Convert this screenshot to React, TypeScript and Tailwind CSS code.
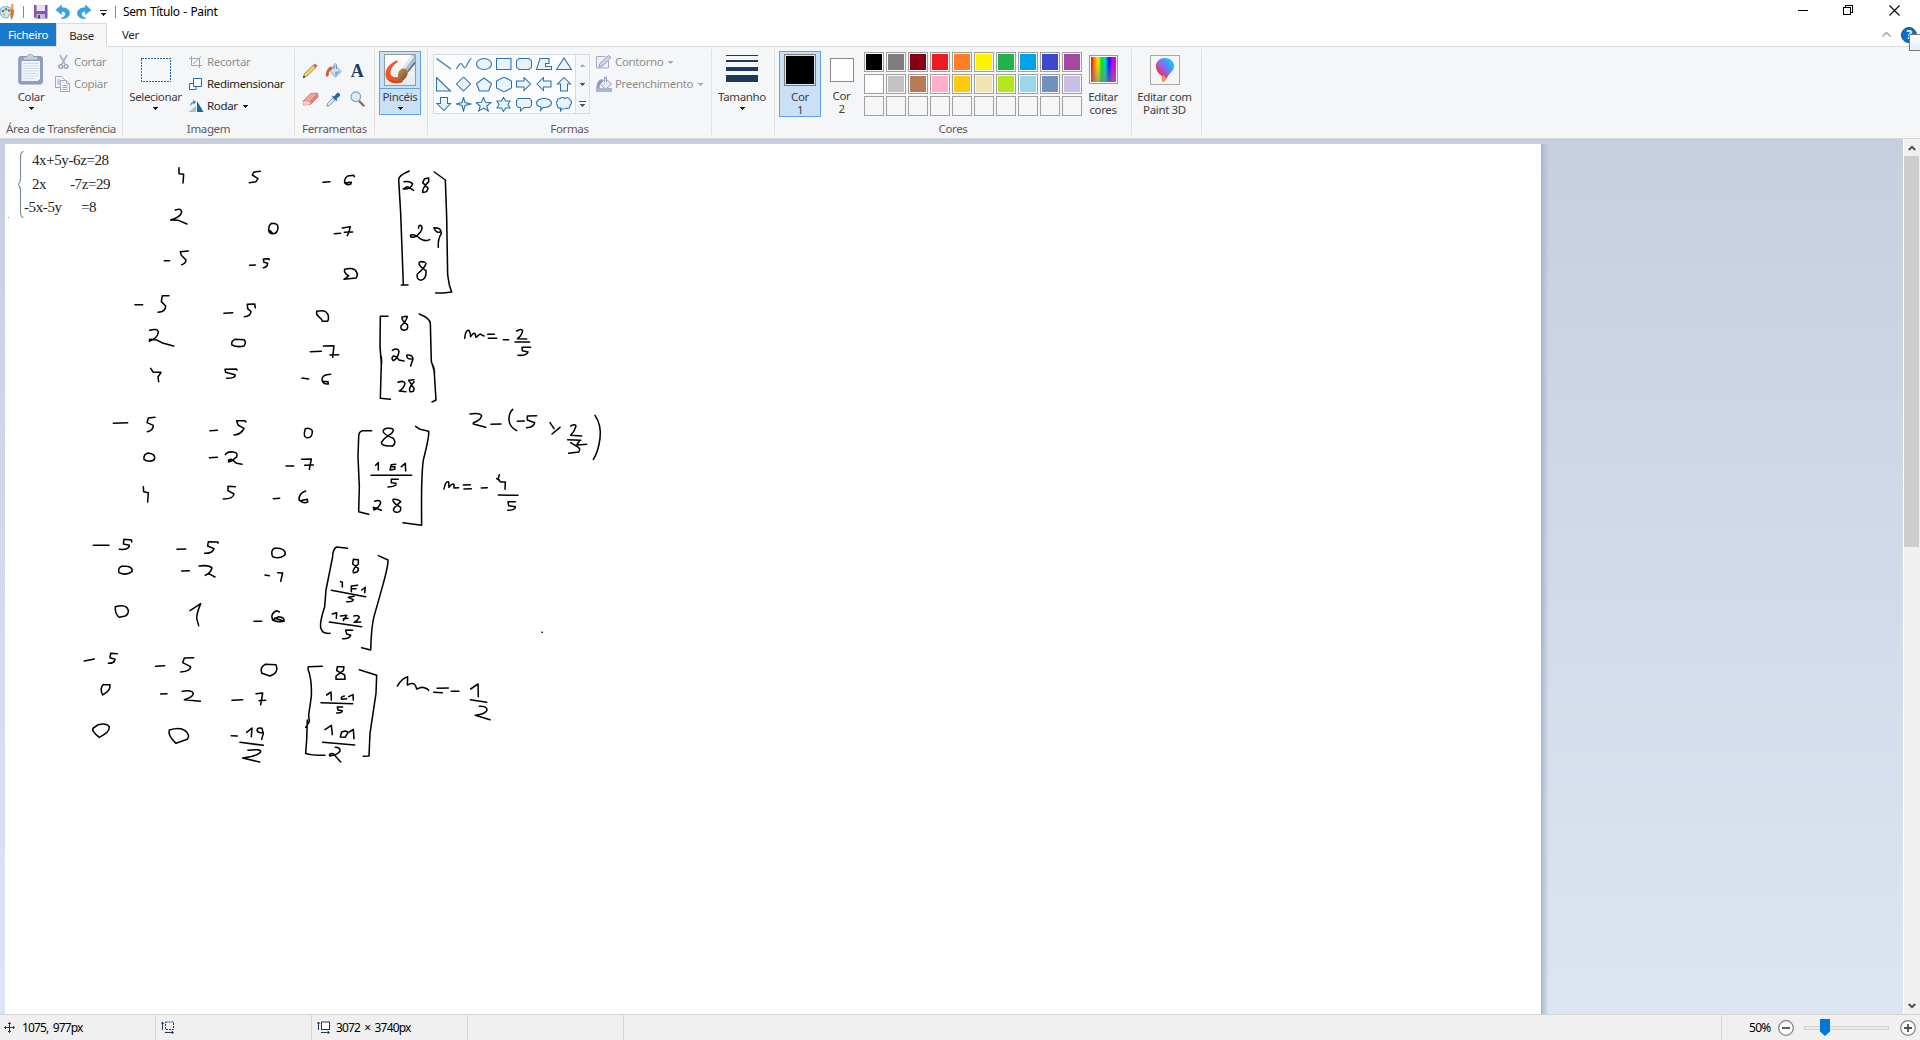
import React from "react";

/* ---------- freehand ink, in units of a third of a pixel ---------- */

type Stroke = { x: number; y: number; d: string[] };

const INK: Stroke[] = [
  {
    x: 0,
    y: 140,
    d: [
      "M537 83L537 101L551 103L549 129",
      "M781 94L762 96L757 105L774 116L768 125L748 128",
      "M526 210Q545 204 545 216Q542 232 512 240L535 241L561 252",
      "M816 250Q806 254 806 270Q808 282 820 281Q833 280 834 262Q834 250 816 250M810 272L818 280",
      "M493 362L509 362M565 333L541 335L544 346L558 360Q557 371 545 374",
      "M749 376L766 375M808 359L806 356L790 357L792 367L803 370Q802 381 790 383",
      "M405 494L428 494M507 467L487 467L484 485L497 498Q497 516 474 517",
      "M672 520L698 518M766 503L764 492L742 493L743 506L753 515Q751 530 733 530",
      "M449 571Q473 564 475 576Q473 595 448 604L449 598L470 600L490 610L521 618",
      "M705 598Q692 604 696 615Q712 623 732 618Q740 606 732 599L705 598",
      "M452 685L460 697L483 697L474 711L476 725",
      "M711 690L709 687L675 688L677 697L705 704Q708 715 680 715",
    ],
  },
  {
    x: 300,
    y: 150,
    d: [
      "M69 97L90 95M163 80L161 76L143 78Q132 86 134 98Q140 106 152 103L154 97L137 98",
      "M103 251L122 250M127 234L151 230Q148 245 142 257M133 247L158 246",
      "M134 358Q154 353 164 359Q178 372 168 384L132 388L146 378Q130 368 134 358",
      "M328 63Q298 75 296 88L302 190L310 404M304 405L324 405",
      "M403 66L436 90L440 200L443 375L448 405L455 426L430 429L407 429",
      "M312 95Q332 92 338 102Q332 118 310 117L322 110L341 121",
      "M386 84L374 86L368 98L384 114Q383 128 368 127Q366 115 386 95Z",
      "M356 235Q354 226 362 226Q370 232 362 245Q352 258 342 262Q328 262 332 255Q345 252 360 266Q375 276 389 269",
      "M402 234Q408 250 420 246M402 233Q424 232 424 250Q413 268 415 292",
      "M374 337Q356 331 357 342Q360 350 378 362Q380 388 362 391Q348 388 352 372Q376 352 378 340",
      "M50 484Q70 480 78 486Q90 497 83 514L67 514Q66 508 56 500Q48 494 50 484",
      "M31 605L64 604M70 588L102 587L98 622M90 615L116 614",
      "M6 684L26 687M92 673Q64 674 66 690Q70 704 85 702L84 695L68 694",
      "M264 499L241 499L240 590L244 640L241 745L271 748M244 620L245 640",
      "M320 499L306 501Q304 512 322 524Q327 540 312 541Q300 538 303 528Q318 515 322 500",
      "M358 492Q390 505 391 520L394 635L402 655L408 750L396 756M396 640L404 668",
      "M277 601Q292 592 297 604Q294 626 280 632Q272 625 280 618Q290 618 297 630L312 633",
      "M320 616Q320 628 334 627M320 616Q336 612 339 626L332 648",
      "M294 697Q312 690 315 700Q312 715 298 723L318 725",
      "M342 689L326 691L342 715Q344 727 330 725Q324 715 342 695",
      "M494 565Q496 540 507 541Q512 550 512 560Q520 545 526 553L528 562L540 552L552 558",
      "M563 553L583 553M565 565L590 565M610 569L626 569",
      "M650 543Q664 534 668 542Q665 558 652 566L680 567M645 576L689 576",
      "M692 592L666 592L667 602L684 606Q680 617 654 616",
    ],
  },
  {
    x: 80,
    y: 390,
    d: [
      "M100 100L143 98M225 82L205 84L201 98L220 106Q220 122 202 125",
      "M390 122L412 121M498 96L495 92L470 92L474 105L492 115Q484 133 462 135",
      "M676 116Q668 142 680 143Q698 145 697 122Q690 112 676 116",
      "M205 189Q190 192 192 208Q205 218 222 210Q230 192 205 189",
      "M388 203L412 202M436 194Q442 184 460 186Q475 188 470 200Q460 212 446 216Q442 208 455 208L470 220L486 223",
      "M618 228L641 228M665 208L694 207L688 238M674 226L700 225",
      "M190 290L191 305L205 308L203 336",
      "M466 290L444 289L444 302L462 312Q460 327 430 327",
      "M580 326L599 325M677 303Q656 310 657 330Q670 342 683 336L682 328L660 332",
      "M40 466L87 466M155 456L155 450L132 448L130 462L148 466Q148 480 118 478",
      "M291 478L317 477M414 460L414 456L385 455L383 468L402 476Q398 490 374 490",
      "M585 474Q570 480 578 500Q600 508 615 495Q620 475 585 474",
      "M128 528Q112 532 117 548Q138 558 156 545Q160 528 128 528",
      "M305 543L328 542M357 528Q388 524 396 534Q392 548 376 556Q384 548 396 556L405 561",
      "M555 555L568 557M593 548L608 549L602 574",
      "M106 650Q130 644 140 652Q152 668 136 678L118 682Q104 672 106 650",
      "M330 662L362 641Q350 670 350 685L356 707",
      "M522 694L545 694M598 666L590 662Q570 670 578 690Q595 698 612 694Q614 682 596 680L578 690M612 694L584 684",
      "M802 475L770 471Q758 478 758 500L738 600L734 650Q716 705 724 718Q728 732 750 730",
      "M895 497L924 510Q925 525 910 580L882 680Q874 710 872 780L845 773",
      "M835 509L820 508L818 522L835 535Q836 548 820 548Q815 540 835 522Z",
      "M782 575L787 577L787 591M814 605L814 588L833 586M815 596L828 596M845 600L856 592L854 608",
      "M754 601L857 620M822 619L805 622L820 629Q818 637 800 635",
      "M757 672L770 668L769 685M781 678L800 676L790 692M790 686L804 685M822 678Q836 674 838 682Q832 692 822 697L842 696",
      "M748 696L845 710M818 721L797 720L800 732L812 736Q808 747 788 746",
    ],
  },
  {
    x: 330,
    y: 390,
    d: [
      "M125 122L98 122Q86 124 86 140L84 200L88 290L86 365L116 373",
      "M190 122Q190 113 170 115Q158 118 160 126Q165 135 190 145Q200 160 188 168Q155 170 154 158Q160 145 185 130L190 122",
      "M257 109L270 118L296 124Q298 140 280 210Q273 260 275 406L219 398",
      "M137 226L145 218L145 240M197 223L184 224L180 240L194 238L195 230L184 230M214 230L226 220L227 243",
      "M123 256L245 256M205 268L184 268L184 278L198 280Q200 290 174 291",
      "M134 334Q152 328 152 338Q148 352 132 360L130 352L154 361",
      "M212 335Q205 326 190 328Q186 332 196 342L212 352Q214 368 198 367Q184 362 196 350L212 335",
      "M420 72Q452 68 455 78Q450 92 430 98L430 102L467 112M483 103L513 102",
      "M548 58Q536 70 537 90Q538 110 560 122M562 94L583 93M620 77L592 78L592 90L614 98Q612 112 590 113",
      "M660 98L672 116M690 112L666 132",
      "M722 108Q736 100 738 108Q734 124 722 136L755 138M713 149L752 151",
      "M722 158L735 166L770 163M748 153L738 168Q755 175 746 186L716 190",
      "M795 76Q815 105 810 145Q805 185 790 208",
      "M342 297Q346 272 356 276L357 292Q366 278 372 284L372 294L386 293",
      "M400 285L421 284M402 297L424 296M454 294L472 293",
      "M508 254L504 268L512 276L526 276L525 298M500 266L508 270M505 315L564 316",
      "M556 335L534 335L536 347L556 350Q556 361 533 361",
      "M636 727L637 727",
    ],
  },
  {
    x: 70,
    y: 640,
    d: [
      "M43 63L73 57M142 41L122 40L120 53L135 58Q134 70 115 70",
      "M257 79L284 77M371 53L343 54L338 68L362 80Q362 93 332 96",
      "M586 73L618 74Q625 92 612 102L600 108L576 100Q568 82 586 73",
      "M100 134L120 134Q122 150 105 160L98 165Q88 145 100 134",
      "M272 162L291 161M337 154Q365 148 370 160Q368 172 343 179L391 184",
      "M486 181L518 179M558 161L578 159L572 194M567 182L587 181",
      "M85 254Q112 248 118 262Q118 278 88 292Q62 272 70 264Z",
      "M298 270Q330 260 345 272Q362 285 352 298L318 310Q292 285 298 270",
      "M484 287L502 288M530 277L546 264L544 290M576 265Q562 262 561 270Q564 280 577 278M576 265L580 280L575 298",
      "M510 307L580 316M534 331Q572 326 572 335Q566 348 518 354L569 366",
    ],
  },
  {
    x: 290,
    y: 640,
    d: [
      "M97 79L55 80Q52 85 58 100Q66 130 64 170L56 225L58 245L47 262M52 240L50 300L47 340Q60 346 105 346",
      "M142 80L162 80L160 92L138 108L138 118L165 118L164 105L140 92Z",
      "M110 165L123 156L124 180M163 168Q150 172 155 178L170 176M176 170L189 164L190 180",
      "M93 188L188 191M158 201L142 201L144 210L157 212Q156 220 140 219",
      "M105 269L124 256L127 284M155 276Q170 270 174 278L165 292L151 291L155 276M178 276L190 268L192 296",
      "M98 307L194 315M136 322Q152 322 150 334Q140 346 120 348Q114 340 130 341L152 366",
      "M208 89L260 106L258 160L240 280L237 348L220 349",
      "M322 138Q335 115 353 110L352 135Q370 125 377 138L380 147L395 142Q412 145 416 151",
      "M441 145L475 144M431 157L457 158M484 154L507 154",
      "M542 147L564 132L565 170M541 179L590 187M568 199Q592 198 591 210Q588 222 556 226L600 239",
    ],
  },
];

function Ink() {
  return (
    <svg
      className="pointer-events-none absolute left-0 top-0"
      width="640"
      height="660"
      viewBox="5 144 640 660"
      fill="none"
      stroke="#000"
      strokeWidth="4.6"
      strokeLinecap="round"
      strokeLinejoin="round"
    >
      {INK.map((g, i) => (
        <g key={i} transform={`translate(${g.x} ${g.y}) scale(0.33333)`}>
          {g.d.map((d, j) => (
            <path key={j} d={d} />
          ))}
        </g>
      ))}
    </svg>
  );
}

/* ---------- small pieces ---------- */

function Caret({ className = "text-[#1a1a1a]" }: { className?: string }) {
  return (
    <svg width="5" height="3" viewBox="0 0 5 3" className={className} shapeRendering="crispEdges">
      <path d="M0 0h5v1H4v1H3v1H2V2H1V1H0z" fill="currentColor" />
    </svg>
  );
}

function Group({ width, label, children }: { width: string; label?: string; children: React.ReactNode }) {
  return (
    <div className={`flex h-full shrink-0 ${width}`}>
      <div className="flex min-w-0 flex-1 flex-col">
        <div className="flex h-[73px] items-start pt-[4px]">{children}</div>
        <div className="h-[18px] whitespace-nowrap text-center leading-[18px] text-[#5c5c5c]">{label}</div>
      </div>
      <div className="mt-[2px] h-[86px] w-px bg-[#e0e1e3]" />
    </div>
  );
}

function Item({ icon, text, off, caret }: { icon: React.ReactNode; text: string; off?: boolean; caret?: boolean }) {
  return (
    <div className={`flex h-[22px] items-center whitespace-nowrap ${off ? "text-[#8f8f8f]" : "text-[#262626]"}`}>
      <span className="flex w-[19px] shrink-0 items-center">{icon}</span>
      <span>{text}</span>
      {caret && <span className="ml-[5px]"><Caret className={off ? "text-[#a9abb0]" : "text-[#1a1a1a]"} /></span>}
    </div>
  );
}

/* ---------- icons ---------- */

const PaintIcon = () => (
  <svg width="17" height="17" viewBox="0 0 17 17">
    <path d="M1 8C1 4.500 5 3 9 4c3 .8 5 3 4.500 5.500C13 12 11 11 9.800 12c-1 1 .2 2.500-2 3C4 15.500.5 12 1 8z" fill="#cfe6f4" stroke="#6fa5c8" />
    <circle cx="4" cy="8" r="1.300" fill="#3a7ac8" />
    <circle cx="7" cy="6.200" r="1.300" fill="#44ad45" />
    <circle cx="10" cy="7.500" r="1.300" fill="#e34a36" />
    <circle cx="5" cy="11.500" r="1.300" fill="#f2b533" />
    <path d="M12 1h2.500v6H12z" fill="#efa35b" />
    <path d="M11.500 6.500h3.500V9c-.3 3-.7 5-2.500 8-1.300-3-1.200-5-1-8z" fill="#d9772c" />
  </svg>
);

const SaveIcon = () => (
  <svg width="14" height="14" viewBox="0 0 14 14">
    <path d="M0 0h13.500v13.500H2L0 12z" fill="#8259a8" />
    <path d="M2.500 0h8.500v6H2.500z" fill="#e6e3ee" />
    <path d="M2.500 9h8.500v4.500H2.500z" fill="#c3b8d6" />
    <path d="M4 10h2v3.500H4z" fill="#5b3a84" />
  </svg>
);

const UndoIcon = ({ flip }: { flip?: boolean }) => (
  <svg width="14" height="14" viewBox="0 0 14 14" className={flip ? "-scale-x-100" : ""}>
    <path d="M5.500 0L0 5l5.500 4.500V6.500C8.500 6 9.500 7.500 9.500 9c0 1.800-1.800 3.200-4.500 4.500C10.500 14 13.500 11.500 13.500 8 13.500 4.500 10 2.500 5.500 2.800z" fill="#37a5e3" stroke="#2389cc" strokeWidth=".5" />
  </svg>
);

const ClipboardIcon = () => (
  <svg width="26" height="31" viewBox="0 0 26 31">
    <rect x=".8" y="2.500" width="23.500" height="27.500" rx="2" fill="#8f9fc1" stroke="#8495b8" />
    <path d="M3.500 7h18.500v18l-2.500 2h-16z" fill="#f2f6fc" />
    <path d="M5 9.500h15.500M5 12h15.500M5 14.500h15.500M5 17h15.500M5 19.500h15.500M5 22h15.500M5 24.500h11" stroke="#cdd9ea" />
    <path d="M5.500 3h3.500C9.500 1 10.500.5 12.500.5S15.500 1 16 3h3.500v3h-14z" fill="#c6d0e2" stroke="#96a5c2" strokeWidth=".8" />
  </svg>
);

const CutIcon = () => (
  <svg width="11" height="16" viewBox="0 0 11 16" fill="none">
    <path d="M2 1l5 9M9 1L4 10" stroke="#a7b4cb" strokeWidth="1.800" />
    <circle cx="2.800" cy="12.500" r="1.900" stroke="#8fa0bf" strokeWidth="1.400" />
    <circle cx="8" cy="12.500" r="1.900" stroke="#8fa0bf" strokeWidth="1.400" />
  </svg>
);

const CopyIcon = () => (
  <svg width="15" height="16" viewBox="0 0 15 16" fill="#f3f6fb" stroke="#9aa9c5">
    <path d="M.5.500h6l3 3v8h-9z" />
    <path d="M2 4h3M2 6h3M2 8h3" />
    <path d="M5.500 4.500h6l3 3v8h-9z" />
    <path d="M11.500 4.500v3h3M7.500 9.500h5M7.500 11.500h5M7.500 13.500h5" />
  </svg>
);

const CropIcon = () => (
  <svg width="13" height="12" viewBox="0 0 13 12" fill="none" stroke="#9aa7bf">
    <path d="M0 2.500h10.500V12M2.500 0v9.500H13M4 8l8-7.500" />
  </svg>
);

const ResizeIcon = () => (
  <svg width="13" height="13" viewBox="0 0 13 13" fill="#fff" stroke="#2168ad">
    <path d="M.5 5.500h6.500v6H.5z" />
    <path d="M4.500.5h8v8h-8z" />
  </svg>
);

const RotateIcon = () => (
  <svg width="16" height="13" viewBox="0 0 16 13">
    <path d="M9 1v11h6.500z" fill="#156b9f" />
    <path d="M8 6v6H.5z" fill="#b6bdc4" />
    <path d="M2.500 5.500C3 3 4.500 2 7 2M5 .3L7.300 2 5 4" fill="none" stroke="#3a89cf" strokeWidth="1.200" />
  </svg>
);

const PencilIcon = () => (
  <svg width="16" height="16" viewBox="0 0 16 16">
    <path d="M1 15l1.500-4.500L11.500 2l2.500 2.500L5 13z" fill="#f0d070" stroke="#8d7442" strokeWidth=".7" />
    <path d="M11 2.500L13 .8l2.500 2L13.500 5z" fill="#c9645d" />
    <path d="M1 15l.8-2.500L3.500 14z" fill="#333" />
  </svg>
);

const BucketIcon = () => (
  <svg width="17" height="16" viewBox="0 0 17 16">
    <path d="M4.500 7L10 2.500l6 6-5.500 5.800z" fill="#cbe1f3" stroke="#5f8fb8" strokeWidth=".8" />
    <path d="M9 6V1.500C9 .5 11.500.5 11.500 2v4" fill="none" stroke="#6689a8" strokeWidth=".8" />
    <path d="M7 3.500C3 4 1 7 .8 13.500c1.800.5 3-.5 3-2C3.500 9 4.500 7.500 7.500 6z" fill="#e2562d" />
    <path d="M10 9l5-1-4.500 5z" fill="#78abd8" />
  </svg>
);

const EraserIcon = () => (
  <svg width="17" height="14" viewBox="0 0 17 14">
    <path d="M1 9l7.500-7.500L15.500 1l.5 4-7.500 7.500L1.500 13z" fill="#dd8180" stroke="#bd6565" strokeWidth=".7" />
    <path d="M1 9.200l7 .3.500 3-7 .5z" fill="#f6cfcc" />
    <path d="M1.500 8.700l7-7 6.500-.2L8 9z" fill="#f0a5a2" />
  </svg>
);

const DropperIcon = () => (
  <svg width="15" height="15" viewBox="0 0 15 15">
    <path d="M7 6L1.500 11.500.8 14.200l2.700-.8L9 8z" fill="#dcebf5" stroke="#67869f" strokeWidth=".8" />
    <path d="M6 4.500L10.500 9l1-1.200-1-1L14 4c1-1.500-1.500-4-3-3L8 4.500 7 3.500z" fill="#2469a8" />
  </svg>
);

const LensIcon = () => (
  <svg width="15" height="16" viewBox="0 0 15 16">
    <path d="M9.500 10.500l4 4" stroke="#8a6d55" strokeWidth="2.400" strokeLinecap="round" />
    <circle cx="5.800" cy="5.800" r="4.800" fill="#dcedf9" stroke="#8fa6bb" strokeWidth="1.300" />
  </svg>
);

const BrushIcon = () => (
  <svg width="32" height="32" viewBox="0 0 32 32">
    <defs>
      <linearGradient id="bbg" x1="0" y1="0" x2="0" y2="1">
        <stop offset="0" stopColor="#fff" />
        <stop offset="1" stopColor="#e2e9ec" />
      </linearGradient>
      <linearGradient id="bwood" x1="0" y1="0" x2="1" y2="1">
        <stop offset="0" stopColor="#c89a5e" />
        <stop offset="1" stopColor="#74481f" />
      </linearGradient>
    </defs>
    <rect x=".5" y=".5" width="31" height="31" fill="url(#bbg)" stroke="#979a9d" />
    <path d="M13 6.500C6 9 1.500 14.500 1.500 20.500 1.500 26 7 30 14 29.500c2 0 4-.7 5-2L14 23c-4 1-7.500-.5-7.500-4.500C6.500 14 9.500 11 13.500 8z" fill="#ee5426" />
    <path d="M13.500 6.300L11 7.500l2.200 1.300z" fill="#ee5426" />
    <path d="M5 25c3 2 8 2.500 13 2-2 2.200-10 3-13-2z" fill="#d23c14" />
    <path d="M18.500 14.500L28 1h3v10L23 18.500z" fill="#aebccc" />
    <path d="M20 14.500L29 2" stroke="#f3f6fa" strokeWidth="1.600" />
    <path d="M23.500 18L31 8.500" stroke="#536b8a" strokeWidth="1.400" />
    <path d="M14 22c-.5-4 2.500-7.500 5.500-7.500 3.200.2 5 3.200 4 6C22 24.500 18.500 28.500 12 28.500 14 26.500 14.500 25 14 22z" fill="url(#bwood)" />
  </svg>
);

const PenBoxIcon = () => (
  <svg width="16" height="14" viewBox="0 0 16 14">
    <path d="M12.500 6v7H.5V1.500h9" fill="#eef2f8" stroke="#a0acc2" />
    <path d="M3 12l1-3.500L12.500.5l2.500 2-8.500 8.500z" fill="#cdd6e4" stroke="#8998b4" />
  </svg>
);

const FillIcon = () => (
  <svg width="17" height="16" viewBox="0 0 17 16">
    <path d="M0 12h16v4H0z" fill="#a9b7cf" />
    <path d="M4 7.500L9.500 2.500l6 5.500-6 5.500z" fill="#e3e9f3" stroke="#95a4bf" />
    <path d="M8.500 6V1h2v5" fill="none" stroke="#95a4bf" />
    <path d="M6.500 3C3 3.500.5 6 .5 12h3C3.500 9 4.500 7 7 5.500z" fill="#8d9dbb" />
  </svg>
);

const SHAPES = [
  "M.5 1.500L15 12",
  "M.5 12C3 7 5 5 6.500 8S9 12 10.500 9 13 2.500 15.500 1.500",
  "M8 1.500C12 1.500 15.500 4 15.500 7S12 12.500 8 12.500.5 10 .5 7 4 1.500 8 1.500z",
  "M.5 1.500h14.500v11H.5z",
  "M3 1.500h10l2.500 2.500v6L13 12.500H3L.5 10V4z",
  "M4 1.500h9v5H9.500v3h6v3H.5z",
  "M8 1L15.500 12.500H.5z",
  "M.5.5L14.500 14H.5z",
  "M7.500 0L14.500 7l-7 7-7-7z",
  "M8 1l7.500 5.500-3 7.500h-9l-3-7.500z",
  "M8 0l7.500 4v7L8 15 .5 11V4z",
  "M.5 4H8V.5L14.500 7 8 13.500V10H.5z",
  "M15 4H7.500V.5L1 7l6.500 6.500V10H15z",
  "M8 .5L14.500 7h-3v7h-7V7h-3z",
  "M4.500.5h7v6h3L8 13.500 1 6.500h3.500z",
  "M7.500.5L9 5.500l5.500 1.500L9 8.500 7.500 14 6 8.500.5 7 6 5.500z",
  "M7.500.5l2 4.800 5.500.2-4.200 3.500 1.500 5-4.800-3-4.800 3 1.500-5L0 5.500l5.500-.2z",
  "M7.500.2l2 3.800H14l-2 3.500 2 3.500H9.500l-2 3.500-2-3.500H1l2-3.500L1 4h4.500z",
  "M2.500 1.500h11l2 2v5l-2 2H8l-3.500 3.500V10.500h-2l-2-2v-5z",
  "M8 1.500C12 1.500 15.500 3.500 15.500 6S12 10.500 8 10.500H7L4.500 13.500l.5-3.500C2 9.500.5 8 .5 6 .5 3.500 4 1.500 8 1.500z",
  "M4 1.500C6 0 8 .5 8.500 1.500 11 0 14 1 14 3c2 1 2 4 0 5 .5 3-2 4-4 3-1 1-3 1.500-4 .5L4.500 14v-3C2 11.500 1 10 1.500 8-.5 7 0 4.500 1.500 4 1 2.500 2 1.500 4 1.500z",
];

const DimsIcon = ({ dashed }: { dashed?: boolean }) => (
  <svg width="14" height="13" viewBox="0 0 14 13" fill="none" stroke="#1f3a63">
    <path d="M1.500 1v8M0 2.800L1.500 1 3 2.800M4 11.500h8M10.500 10l2 1.500-2 1.500" />
    <rect x="4.500" y="1" width="8" height="7.500" strokeDasharray={dashed ? "2 1" : undefined} fill={dashed ? "none" : "#fff"} />
  </svg>
);

/* ---------- palette ---------- */

const COLORS = [
  "bg-black", "bg-[#7f7f7f]", "bg-[#880015]", "bg-[#ed1c24]", "bg-[#ff7f27]", "bg-[#fff200]", "bg-[#22b14c]", "bg-[#00a2e8]", "bg-[#3f48cc]", "bg-[#a349a4]",
  "bg-white", "bg-[#c3c3c3]", "bg-[#b97a57]", "bg-[#ffaec9]", "bg-[#ffc90e]", "bg-[#efe4b0]", "bg-[#b5e61d]", "bg-[#99d9ea]", "bg-[#7092be]", "bg-[#c8bfe7]",
];

/* ---------- page sections ---------- */

function TitleBar() {
  return (
    <div className="flex h-[23px] shrink-0 items-center bg-white">
      <div className="-ml-px flex w-[24px]"><PaintIcon /></div>
      <div className="h-[12px] w-px bg-[#8a8a8a]" />
      <div className="ml-[10px] flex items-center pt-px">
        <SaveIcon />
        <span className="ml-[8px]"><UndoIcon /></span>
        <span className="ml-[7px]"><UndoIcon flip /></span>
      </div>
      <svg width="7" height="7" viewBox="0 0 7 7" className="ml-[9px] mt-[3px]" shapeRendering="crispEdges">
        <path d="M0 0h7v1H0zM1 3h5v1H5v1H4v1H3V5H2V4H1z" fill="#222" />
      </svg>
      <div className="ml-[8px] h-[12px] w-px bg-[#8a8a8a]" />
      <span className="ml-[7px] whitespace-nowrap text-[12px] tracking-[-0.4px] text-black [word-spacing:1px]">Sem Título - Paint</span>
      <div className="ml-auto flex items-center pr-[20px] pb-[3px]">
        <div className="h-px w-[10px] bg-black" />
        <svg width="11" height="11" viewBox="0 0 11 11" className="ml-[35px]" fill="none" stroke="#000" shapeRendering="crispEdges">
          <path d="M.5 2.500h7v7h-7zM2.500 2.500v-2h7v7h-2" />
        </svg>
        <svg width="11" height="11" viewBox="0 0 11 11" className="ml-[35px]" stroke="#000" strokeWidth="1.100">
          <path d="M.5.5l10 10M10.500.5l-10 10" />
        </svg>
      </div>
    </div>
  );
}

function Tabs() {
  return (
    <div className="relative flex h-[24px] shrink-0 border-b border-[#dadbdc] bg-white text-[11.500px] tracking-[-0.3px] leading-[24px]">
      <div className="w-[56px] bg-[#1979ca] text-center text-white">Ficheiro</div>
      <div className="-mb-px w-[51px] border-x border-t border-[#dadbdc] bg-[#f5f6f7] text-center leading-[23px] text-[#262626]">Base</div>
      <div className="ml-[15px] text-[#262626]">Ver</div>
      <div className="ml-auto flex items-center pr-[3px]">
        <svg width="9" height="5" viewBox="0 0 9 5" fill="none" stroke="#a5a5a5" strokeWidth="1.500" className="mr-[10px]">
          <path d="M.5 4.500l4-4 4 4" />
        </svg>
        <div className="flex h-[16px] w-[16px] items-center justify-center rounded-full border border-[#0a4f94] bg-[#0b6fcb] text-[12px] font-bold leading-none text-white">?</div>
      </div>
      <div className="absolute right-0 top-[11px] z-10 h-[17px] w-[11px] border-y border-l border-[#7b7b7b] bg-linear-to-b from-white to-[#e4ecf7]" />
    </div>
  );
}

function Ribbon() {
  return (
    <div className="flex h-[92px] shrink-0 border-b border-[#d5d6d8] bg-[#f5f6f7] text-[11.500px] tracking-[-0.35px] text-[#262626]">
      <Group width="w-[123px]" label="Área de Transferência">
        <div className="ml-[8px] flex w-[46px] flex-col items-center pt-[3px]">
          <ClipboardIcon />
          <span className="mt-[3px] leading-[17px] text-[#404040]">Colar</span>
          <span className="mt-[2px]"><Caret /></span>
        </div>
        <div className="ml-px flex flex-col">
          <Item off icon={<span className="ml-[3px]"><CutIcon /></span>} text="Cortar" />
          <Item off icon={<CopyIcon />} text="Copiar" />
        </div>
      </Group>

      <Group width="w-[172px]" label="Imagem">
        <div className="ml-[5px] flex w-[55px] flex-col items-center pt-[7px]">
          <svg width="30" height="24" viewBox="0 0 30 24" shapeRendering="crispEdges">
            <rect x=".5" y=".5" width="29" height="23" fill="none" stroke="#2168ad" strokeDasharray="2 1" />
          </svg>
          <span className="mt-[6px] leading-[17px] text-[#404040]">Selecionar</span>
          <span className="mt-[2px]"><Caret /></span>
        </div>
        <div className="ml-[5px] flex flex-col">
          <Item off icon={<span className="ml-px"><CropIcon /></span>} text="Recortar" />
          <Item icon={<span className="ml-px"><ResizeIcon /></span>} text="Redimensionar" />
          <Item icon={<RotateIcon />} text="Rodar" caret />
        </div>
      </Group>

      <Group width="w-[80px]" label="Ferramentas">
        <div className="grid grid-cols-[24px_23px_24px] grid-rows-[28px_28px] place-items-center pl-[3px] pt-[6px]">
          <PencilIcon />
          <BucketIcon />
          <span className="text-[18px] font-bold leading-none text-[#1f3a5f] [font-family:'Liberation_Serif',serif]">A</span>
          <EraserIcon />
          <DropperIcon />
          <LensIcon />
        </div>
      </Group>

      <Group width="w-[53px]">
        <div className="ml-[4px] flex h-[64px] w-[42px] flex-col items-center border border-[#62a2e4] bg-[#c9e0f7]">
          <div className="flex h-[37px] w-full justify-center border-b border-[#62a2e4] pt-[2px]"><BrushIcon /></div>
          <span className="leading-[15px] text-[#404040]">Pincéis</span>
          <span className="mt-[3px] flex"><Caret /></span>
        </div>
      </Group>

      <Group width="w-[284px]" label="Formas">
        <div className="ml-[5px] mt-[3px] flex h-[60px] w-[157px] border border-[#dadcde] bg-[#fafcfe]">
          <div className="grid w-[141px] grid-cols-[repeat(7,20px)] grid-rows-[repeat(3,19.700px)] place-items-center">
            {SHAPES.map((d, i) => (
              <svg key={i} width="16" height="15" viewBox="0 0 16 15" fill={i < 2 ? "none" : "#e9f3fb"} stroke="#2b71ab" strokeWidth="1.050">
                <path d={d} />
              </svg>
            ))}
          </div>
          <div className="flex flex-1 flex-col border-l border-[#dadcde] bg-[#f5f6f7]">
            <span className="flex h-[20px] items-center justify-center"><Caret className="rotate-180 text-[#b1b5ba]" /></span>
            <span className="flex h-[19px] items-center justify-center"><Caret className="text-[#46566e]" /></span>
            <span className="flex h-[19px] flex-col items-center justify-center gap-[2px]">
              <span className="h-px w-[7px] bg-[#46566e]" />
              <Caret className="text-[#46566e]" />
            </span>
          </div>
        </div>
        <div className="ml-[6px] flex flex-col">
          <Item off caret icon={<PenBoxIcon />} text="Contorno" />
          <Item off caret icon={<FillIcon />} text="Preenchimento" />
        </div>
      </Group>

      <Group width="w-[63px]">
        <div className="flex w-full flex-col items-center pr-[2px] pt-[4px]">
          <div className="h-px w-[32px] bg-[#1e395b]" />
          <div className="mt-[4px] h-[2px] w-[32px] bg-[#1e395b]" />
          <div className="mt-[5px] h-[4px] w-[32px] bg-[#1e395b]" />
          <div className="mt-[4px] h-[7px] w-[32px] bg-[#1e395b]" />
          <span className="mt-[6px] leading-[17px] text-[#404040]">Tamanho</span>
          <span className="mt-[2px]"><Caret /></span>
        </div>
      </Group>

      <Group width="w-[357px]" label="Cores">
        <div className="ml-[4px] flex h-[66px] w-[42px] flex-col items-center border border-[#62a2e4] bg-[#c9e0f7] pt-[2px]">
          <div className="h-[32px] w-[32px] border border-[#7a7d80] bg-black shadow-[inset_0_0_0_1px_#d5e6f7]" />
          <div className="mt-[4px] text-center leading-[13px] text-[#404040]">Cor<br />1</div>
        </div>
        <div className="flex h-[66px] w-[41px] flex-col items-center pt-[7px]">
          <div className="h-[24px] w-[24px] border border-[#8a8a8a] bg-white" />
          <div className="mt-[7px] text-center leading-[13px] text-[#404040]">Cor<br />2</div>
        </div>
        <div className="ml-[2px] mt-px grid grid-cols-[repeat(10,20px)] gap-[2px]">
          {COLORS.map((c, i) => (
            <div key={i} className="h-[20px] border border-[#a0a0a0] bg-[#f8f8f8] p-px">
              <div className={`h-full ${c}`} />
            </div>
          ))}
          {Array.from({ length: 10 }, (_, i) => (
            <div key={i} className="h-[20px] border border-[#a0a0a0] bg-[#f5f6f7]" />
          ))}
        </div>
        <div className="flex w-[42px] flex-col items-center pt-[4px]">
          <div className="h-[29px] w-[29px] border border-[#9b9b9b] bg-white p-px">
            <div className="h-full bg-[linear-gradient(to_bottom,transparent_20%,#80808099),linear-gradient(to_right,#f00,#ff8a00,#e8f000,#00e51a,#00d8c8,#0022ff,#c400ff,#ff0090)]" />
          </div>
          <div className="mt-[6px] whitespace-nowrap text-center leading-[13px] text-[#404040]">Editar<br />cores</div>
        </div>
      </Group>

      <Group width="w-[70px]">
        <div className="flex w-full flex-col items-center pt-[4px] pr-[4px]">
          <div className="flex h-[30px] w-[30px] items-center justify-center border border-[#a8a8a8] bg-[#f6f6f6]">
            <svg width="20" height="26" viewBox="0 0 20 26">
              <defs>
                <linearGradient id="p3a" x1="1" y1="0" x2="0" y2="1">
                  <stop offset="0" stopColor="#15d7e6" />
                  <stop offset=".3" stopColor="#35a5f2" />
                  <stop offset=".5" stopColor="#8d62e8" />
                  <stop offset=".7" stopColor="#e8366c" />
                  <stop offset="1" stopColor="#f0a020" />
                </linearGradient>
                <radialGradient id="p3b" cx=".35" cy=".35" r=".5">
                  <stop offset="0" stopColor="#8f6cff" />
                  <stop offset="1" stopColor="#8f6cff" stopOpacity="0" />
                </radialGradient>
              </defs>
              <path d="M10 1c5 0 9 3.500 9 8 0 4-2.500 5.500-5 8.500-2 2.500-2.500 5.500-5.500 7.500-2-.5-1.500-3-1-6C3 17 1 13.500 1 9c0-4.500 4-8 9-8z" fill="url(#p3a)" />
              <circle cx="8" cy="8" r="6" fill="url(#p3b)" />
              <path d="M8 18.500c2 1 2.500 2 3.500 2.500-.7 1.500-1.500 3-3 4-1.500-.5-1.200-3-.5-6.500z" fill="#f2a51e" />
            </svg>
          </div>
          <div className="mt-[5px] whitespace-nowrap text-center leading-[13px] text-[#404040]">Editar com<br />Paint 3D</div>
        </div>
      </Group>
    </div>
  );
}

function Workspace() {
  return (
    <div className="flex min-h-0 flex-1 bg-linear-to-b from-[#c6cfe0] to-[#dce6f2]">
      <div className="flex min-w-0 flex-1 pl-[5px] pt-[5px]">
        <div className="relative h-full w-[1536px] bg-white">
          <div className="flex pl-[13px] pt-[7px] text-[15px] text-[#222] [font-family:'Liberation_Serif',serif]">
            <svg width="8" height="68" viewBox="0 0 8 68" fill="none" stroke="#7d8f98" strokeWidth="1.200">
              <path d="M5.500.5C3 1 2.500 3 2.500 6v22c0 3-.5 4-2.500 5.500 2 1.500 2.500 2.500 2.500 5.500v22c0 3 .5 5 3 5.500" />
            </svg>
            <div className="-ml-px whitespace-pre leading-[23.500px] tracking-[-0.400px]">
              <div className="-mt-[2px] pl-[7px]">4x+5y-6z=28</div>
              <div className="flex pl-[7px]"><span className="w-[38px]">2x</span><span>-7z=29</span></div>
              <div className="-ml-px flex"><span className="w-[57px]">-5x-5y</span><span>=8</span></div>
            </div>
          </div>
          <div className="absolute left-[3px] top-[73px] h-px w-px bg-[#888]" />
          <Ink />
        </div>
        <div className="h-full w-[8px] bg-linear-to-r from-[#a9b6cd] to-transparent" />
      </div>
      <div className="flex w-[17px] flex-col items-center border-l border-white bg-[#f0f0f0]">
        <div className="flex h-[17px] items-center">
          <svg width="8" height="6" viewBox="0 0 8 6" fill="none" stroke="#505050" strokeWidth="2"><path d="M.8 5L4 1.800 7.200 5" /></svg>
        </div>
        <div className="h-[391px] w-[15px] self-start bg-[#cdcdcd]" />
        <div className="mt-auto flex h-[17px] items-center">
          <svg width="8" height="6" viewBox="0 0 8 6" fill="none" stroke="#505050" strokeWidth="2"><path d="M.8 1L4 4.200 7.200 1" /></svg>
        </div>
      </div>
    </div>
  );
}

function ZoomButton({ plus }: { plus?: boolean }) {
  return (
    <svg width="16" height="16" viewBox="0 0 16 16">
      <circle cx="8" cy="8" r="7.300" fill="#fafafa" stroke="#808080" strokeWidth="1.200" />
      <path d={plus ? "M4 8h8M8 4v8" : "M4 8h8"} stroke="#505050" strokeWidth="1.800" />
    </svg>
  );
}

function StatusBar() {
  return (
    <div className="flex h-[26px] shrink-0 border-t border-[#d5d5d5] bg-[#f0f0f0] text-[12px] leading-[25px] text-black">
      <div className="flex w-[156px] items-center border-r border-[#d7d7d7] pl-[4px]">
        <svg width="11" height="11" viewBox="0 0 11 11" stroke="#1f3a63" fill="none">
          <path d="M5.500.5v10M.5 5.500h10M4 2L5.500.5 7 2M4 9l1.500 1.500L7 9M2 4L.5 5.500 2 7M9 4l1.500 1.500L9 7" />
        </svg>
        <span className="ml-[7px] tracking-[-0.850px] [word-spacing:2px]">1075, 977px</span>
      </div>
      <div className="flex w-[156px] items-center border-r border-[#d7d7d7] pl-[5px]"><DimsIcon dashed /></div>
      <div className="flex w-[156px] items-center border-r border-[#d7d7d7] pl-[5px]">
        <DimsIcon />
        <span className="ml-[5px] tracking-[-0.850px] [word-spacing:2px]">3072 × 3740px</span>
      </div>
      <div className="w-[156px] border-r border-[#d7d7d7]" />
      <div className="flex-1 border-r border-[#d7d7d7]" />
      <div className="flex w-[198px] items-center pl-[27px]">
        <span className="w-[28px] tracking-[-0.700px]">50%</span>
        <span className="ml-px"><ZoomButton /></span>
        <div className="relative ml-[10px] h-[4px] w-[85px] border border-[#d0d3d2] bg-[#e7eaea]">
          <svg width="10" height="17" viewBox="0 0 10 17" className="absolute left-[15px] top-[-8px]"><path d="M0 0h10v12.500l-5 4.500-5-4.500z" fill="#0078d7" /></svg>
        </div>
        <span className="ml-[11px]"><ZoomButton plus /></span>
      </div>
    </div>
  );
}

export default function App() {
  return (
    <div className="flex h-[1040px] w-[1920px] flex-col overflow-hidden bg-white [&_svg]:block [&_svg]:shrink-0 [font-family:'Noto_Sans','Open_Sans',sans-serif]">
      <TitleBar />
      <Tabs />
      <Ribbon />
      <Workspace />
      <StatusBar />
    </div>
  );
}
